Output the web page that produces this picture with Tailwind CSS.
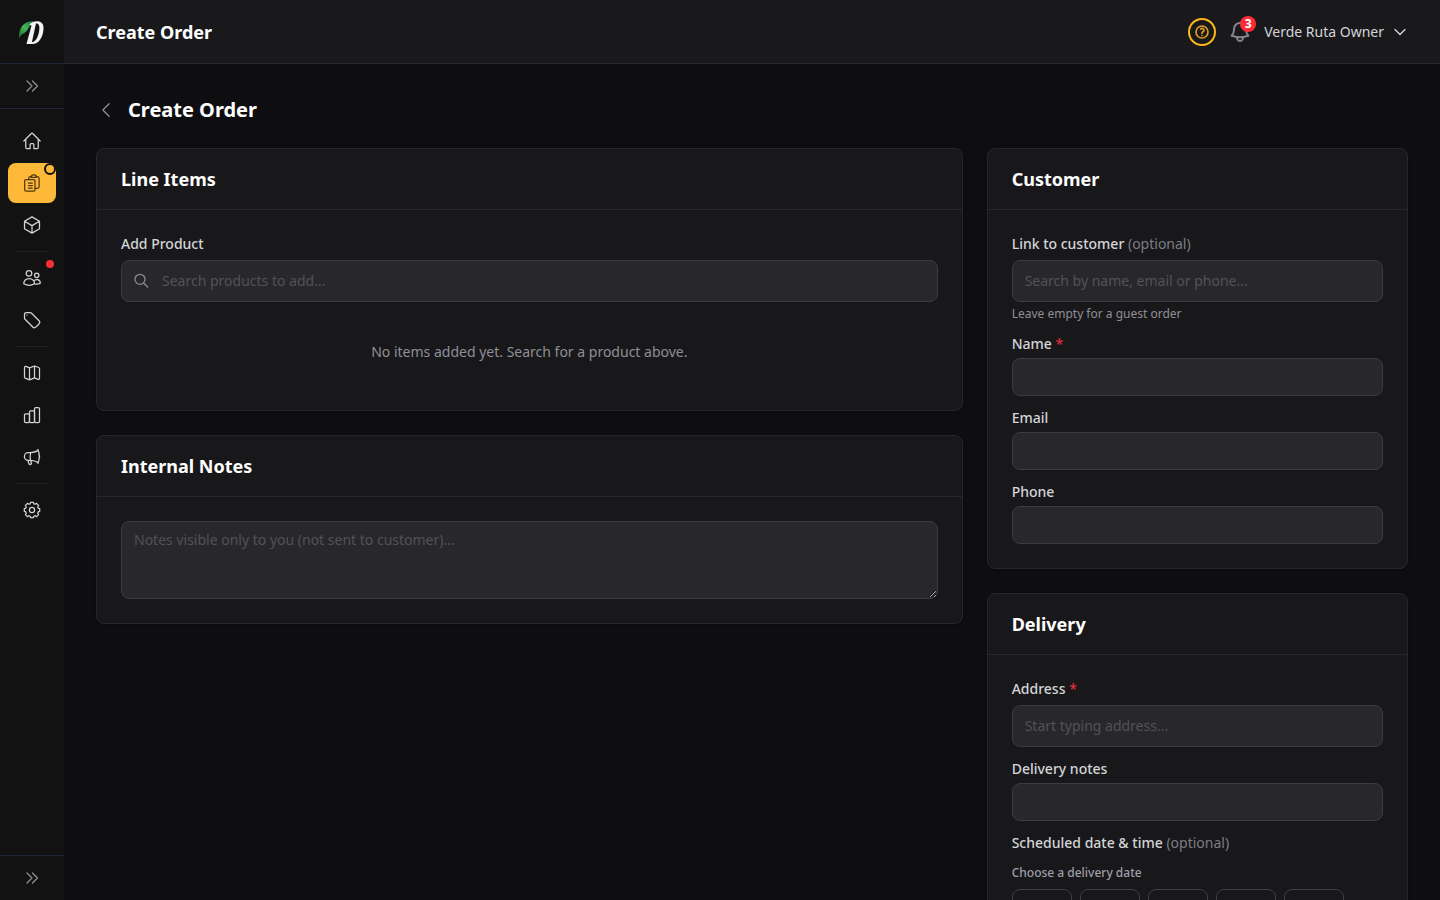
<!DOCTYPE html>
<html lang="en">
<head>
    <meta charset="UTF-8">
    <meta name="viewport" content="width=device-width, initial-scale=1.0">
    <title>Create Order</title>
    <script src="https://cdn.jsdelivr.net/npm/@tailwindcss/browser@4"></script>
</head>
<body class="flex h-screen overflow-hidden bg-[#0e0e10] font-['Noto_Sans',sans-serif] text-sm text-zinc-300">
    <!-- Sidebar -->
    <aside class="flex w-16 shrink-0 flex-col bg-[#121212]">
        <a href="#" aria-label="Dashboard" class="flex h-16 items-center justify-center border-b border-[#1e2836]">
            <svg class="size-8" viewBox="0 0 32 32">
                <defs>
                    <linearGradient id="leaf" x1="0" y1="1" x2="1" y2="0">
                        <stop offset="0" stop-color="#14612b"/>
                        <stop offset=".5" stop-color="#45b556"/>
                        <stop offset="1" stop-color="#1c7a38"/>
                    </linearGradient>
                </defs>
                <path fill="url(#leaf)" d="M3 23C2.500 12 7 5 18 5.200C14 8 12 15.500 6.500 18C4.800 19.200 3.600 21.400 3 23Z"/>
                <path fill="#f4f4f5" fill-rule="evenodd" d="M13.500 8.500C16 4.500 27.500 3 27.500 11.500C27.700 19 23.700 28 17 28H10.500L15.500 9.500C14.800 9.400 14.200 9 13.500 8.500ZM20 7.200L15.900 26.300C20.500 26 23.300 18 23.400 12C23.500 9 22.300 7.400 20 7.200Z"/>
            </svg>
        </a>
        <button type="button" aria-label="Expand sidebar" class="flex h-[45px] items-center justify-center border-b border-[#1e2836] text-[#8f8f96]">
            <svg class="size-4" fill="none" viewBox="0 0 16 16" stroke-width="1.25" stroke="currentColor"><path stroke-linecap="round" stroke-linejoin="round" d="m3 3 5 5-5 5m5.500-10 5 5-5 5"/></svg>
        </button>

        <nav class="flex flex-1 flex-col gap-0.5 px-2 py-3 text-zinc-300">
            <a href="#" aria-label="Home" class="flex h-10 items-center justify-center rounded-lg">
                <svg class="size-5" fill="none" viewBox="0 0 24 24" stroke-width="1.5" stroke="currentColor"><path stroke-linecap="round" stroke-linejoin="round" d="m2.250 12 8.954-8.955c.44-.439 1.152-.439 1.591 0L21.750 12M4.500 9.750v10.125c0 .621.504 1.125 1.125 1.125H9.750v-4.875c0-.621.504-1.125 1.125-1.125h2.250c.621 0 1.125.504 1.125 1.125V21h4.125c.621 0 1.125-.504 1.125-1.125V9.750"/></svg>
            </a>
            <a href="#" aria-label="Orders" class="relative flex h-10 items-center justify-center rounded-lg bg-[#ffb938] text-[#4d3a12]">
                <svg class="size-5" fill="none" viewBox="0 0 20 20" stroke-width="1.25" stroke="currentColor" stroke-linecap="round" stroke-linejoin="round">
                    <rect x="2.700" y="6.500" width="10.300" height="11.700" rx="1.200"/>
                    <path d="M6.500 10h3.800M6.500 12.500h3.800M6.500 15h3.800M6.700 6.500V5.200c0-.9.600-1.500 1.500-1.600l1-.1M14.400 3.500l1 .1c.9.100 1.700.8 1.700 1.700v8.300c0 .9-.7 1.700-1.600 1.700H13M9.200 4.400c0-1.500 1-2.500 2.300-2.500h.6c1.300 0 2.300 1 2.300 2.500Z"/>
                </svg>
                <span class="absolute top-0 right-0 size-3 rounded-full border-2 border-[#121212] bg-[#ffb938]"></span>
            </a>
            <a href="#" aria-label="Products" class="flex h-10 items-center justify-center rounded-lg">
                <svg class="size-5" fill="none" viewBox="0 0 24 24" stroke-width="1.5" stroke="currentColor"><path stroke-linecap="round" stroke-linejoin="round" d="m21 7.500-9-5.250L3 7.500m18 0-9 5.250m9-5.250v9l-9 5.250M3 7.500l9 5.250M3 7.500v9l9 5.250m0-9v9"/></svg>
            </a>
            <hr class="mx-2 my-1 border-[#222224]">
            <a href="#" aria-label="Customers" class="relative flex h-10 items-center justify-center rounded-lg">
                <svg class="size-5" fill="none" viewBox="0 0 20 20" stroke-width="1.25" stroke="currentColor" stroke-linecap="round" stroke-linejoin="round">
                    <circle cx="7" cy="5.300" r="2.800"/>
                    <circle cx="14.700" cy="7.300" r="2.200"/>
                    <path d="M1.800 15.800C1.600 12.800 4 10.600 7.200 10.600s5.500 2.200 5.300 5.200c-3.200 1.900-7.500 1.900-10.700 0ZM11.800 12.900c1.700-2.300 6.600-1.700 6.500 2.300-1.800.9-3.800 1-5.800.6"/>
                </svg>
                <span class="absolute top-0.5 right-0.5 size-2 rounded-full bg-[#fb2c36]"></span>
            </a>
            <a href="#" aria-label="Discounts" class="flex h-10 items-center justify-center rounded-lg">
                <svg class="size-5" fill="none" viewBox="0 0 24 24" stroke-width="1.5" stroke="currentColor"><path stroke-linecap="round" stroke-linejoin="round" d="M9.568 3H5.250A2.250 2.250 0 0 0 3 5.250v4.318c0 .597.237 1.170.659 1.591l9.581 9.581c.699.699 1.780.872 2.607.33a18.095 18.095 0 0 0 5.223-5.223c.542-.827.369-1.908-.33-2.607L11.160 3.660A2.250 2.250 0 0 0 9.568 3Z"/><path stroke-linecap="round" stroke-linejoin="round" d="M6 6h.008v.008H6V6Z"/></svg>
            </a>
            <hr class="mx-2 my-1 border-[#222224]">
            <a href="#" aria-label="Routes" class="flex h-10 items-center justify-center rounded-lg">
                <svg class="size-5" fill="none" viewBox="0 0 20 20" stroke-width="1.25" stroke="currentColor"><path stroke-linecap="round" stroke-linejoin="round" d="M2.500 4.500c0-.9.700-1.400 1.500-1.100l3.500 1.500 5-1.900 4.200 1.500c.5.200.8.500.8 1v9.900c0 .8-.7 1.300-1.400 1l-3.600-1.500-5 1.900-4.300-1.700c-.4-.2-.7-.5-.7-1ZM7.500 4.900v11.900M12.500 3v11.900"/></svg>
            </a>
            <a href="#" aria-label="Analytics" class="flex h-10 items-center justify-center rounded-lg">
                <svg class="size-5" fill="none" viewBox="0 0 20 20" stroke-width="1.25" stroke="currentColor" stroke-linejoin="round">
                    <rect x="2.500" y="8.800" width="5" height="8.700" rx="1.300"/>
                    <rect x="7.500" y="5.800" width="5" height="11.700" rx="1.300"/>
                    <rect x="12.500" y="2.500" width="5" height="15" rx="1.300"/>
                </svg>
            </a>
            <a href="#" aria-label="Marketing" class="flex h-10 items-center justify-center rounded-lg">
                <svg class="size-5" fill="none" viewBox="0 0 20 20" stroke-width="1.25" stroke="currentColor"><path stroke-linecap="round" stroke-linejoin="round" d="M16.300 3.400C13.800 4.800 11.500 5.500 8.600 5.600H6.300a3.900 3.900 0 0 0 0 7.800h2.300c2.900.1 5.200.8 7.700 2.200M8.600 5.600c-.6 2.600-.6 5.200 0 7.800M15.900 2.500c1.800 4.400 1.800 9.600 0 14M16.900 8c.9.700.9 2.300 0 3M6 13.400c.2 1.300.6 2.500 1.100 3.500.3.600.9.800 1.400.5l.5-.3c.5-.3.600-.8.400-1.300-.4-.8-.6-1.500-.8-2.400"/></svg>
            </a>
            <hr class="mx-2 my-1 border-[#222224]">
            <a href="#" aria-label="Settings" class="flex h-10 items-center justify-center rounded-lg">
                <svg class="size-5" fill="none" viewBox="0 0 20 20" stroke-width="1.25" stroke="currentColor" stroke-linejoin="round">
                    <path d="M8.100 3.800 8.600 2.300H11.400L11.900 3.800 13.040 4.270 14.600 3.420 16.580 5.400 15.730 6.960 16.200 8.100 17.700 8.600V11.400L16.200 11.900 15.730 13.040 16.580 14.600 14.600 16.580 13.040 15.730 11.900 16.200 11.400 17.700H8.600L8.100 16.200 6.960 15.730 5.400 16.580 3.420 14.600 4.270 13.040 3.800 11.900 2.300 11.400V8.600L3.800 8.100 4.270 6.960 3.420 5.400 5.400 3.420 6.960 4.270Z"/>
                    <circle cx="10" cy="10" r="2.600"/>
                </svg>
            </a>
        </nav>

        <button type="button" aria-label="Expand menu" class="flex h-[45px] items-center justify-center border-t border-[#1e2836] text-[#8f8f96]">
            <svg class="size-4" fill="none" viewBox="0 0 16 16" stroke-width="1.25" stroke="currentColor"><path stroke-linecap="round" stroke-linejoin="round" d="m3 3 5 5-5 5m5.500-10 5 5-5 5"/></svg>
        </button>
    </aside>

    <div class="flex min-w-0 flex-1 flex-col">
        <!-- Top bar -->
        <header class="flex h-16 shrink-0 items-center justify-between border-b border-zinc-800 bg-[#19191b] px-8">
            <h1 class="text-lg font-bold text-white">Create Order</h1>
            <div class="flex items-center gap-3">
                <button type="button" aria-label="Help" class="flex size-7 items-center justify-center rounded-full border-2 border-[#fcb716] text-[#e09d1c]">
                    <svg class="size-4" fill="none" viewBox="0 0 24 24" stroke-width="2.5" stroke="currentColor"><path stroke-linecap="round" stroke-linejoin="round" d="M9.879 7.519c1.171-1.025 3.071-1.025 4.242 0 1.172 1.025 1.172 2.687 0 3.712-.203.179-.43.326-.67.442-.745.361-1.450.999-1.450 1.827v.75M21 12a9 9 0 1 1-18 0 9 9 0 0 1 18 0Zm-9 5.250h.008v.008H12v-.008Z"/></svg>
                </button>
                <button type="button" aria-label="Notifications" class="relative text-[#85858d]">
                    <svg class="size-6" fill="none" viewBox="0 0 24 24" stroke-width="2" stroke="currentColor"><path stroke-linecap="round" stroke-linejoin="round" d="M14.857 17.082a23.848 23.848 0 0 0 5.454-1.310A8.967 8.967 0 0 1 18 9.750V9A6 6 0 0 0 6 9v.75a8.967 8.967 0 0 1-2.312 6.022c1.733.64 3.560 1.085 5.455 1.310m5.714 0a24.255 24.255 0 0 1-5.714 0m5.714 0a3 3 0 1 1-5.714 0"/></svg>
                    <span class="absolute -top-1 -right-1 flex size-4 items-center justify-center rounded-full bg-[#fb2c36] text-xs font-bold text-white">3</span>
                </button>
                <button type="button" class="flex items-center gap-2 text-zinc-300">
                    Verde Ruta Owner
                    <svg class="size-4" fill="none" viewBox="0 0 24 24" stroke-width="2" stroke="currentColor"><path stroke-linecap="round" stroke-linejoin="round" d="m19.500 8.250-7.500 7.500-7.500-7.500"/></svg>
                </button>
            </div>
        </header>

        <main class="flex-1 overflow-y-auto px-8 pt-8 [scrollbar-width:none]">
            <div class="mb-6 flex items-center gap-3">
                <a href="#" aria-label="Back" class="text-[#8f8f96]">
                    <svg class="size-5" fill="none" viewBox="0 0 24 24" stroke-width="1.5" stroke="currentColor"><path stroke-linecap="round" stroke-linejoin="round" d="M15.750 19.500 8.250 12l7.500-7.500"/></svg>
                </a>
                <h2 class="text-xl font-bold text-white">Create Order</h2>
            </div>

            <form class="grid grid-cols-3 items-start gap-6">
                <div class="col-span-2 space-y-6">
                    <section class="rounded-lg border border-zinc-800 bg-[#18181a] shadow-sm">
                        <h3 class="border-b border-zinc-800 px-6 py-4 text-lg font-bold text-white">Line Items</h3>
                        <div class="p-6">
                            <label for="product" class="mb-1.5 block font-medium">Add Product</label>
                            <div class="relative">
                                <svg class="absolute top-3 left-3 size-4 text-[#8b8b92]" fill="none" viewBox="0 0 24 24" stroke-width="2" stroke="currentColor"><path stroke-linecap="round" stroke-linejoin="round" d="m22 22.500-6-6M18 11a7.500 7.500 0 1 1-15 0 7.500 7.500 0 0 1 15 0Z"/></svg>
                                <input type="text" id="product" placeholder="Search products to add..."
                                    class="block w-full rounded-lg border border-[#3c3c40] bg-[#28282a] py-2.5 pr-3 pl-10 placeholder-[#525257]">
                            </div>
                            <p class="mt-4 py-6 text-center text-[#8f8f97]">No items added yet. Search for a product above.</p>
                        </div>
                    </section>

                    <section class="rounded-lg border border-zinc-800 bg-[#18181a] shadow-sm">
                        <h3 class="border-b border-zinc-800 px-6 py-4 text-lg font-bold text-white">Internal Notes</h3>
                        <div class="p-6">
                            <textarea id="notes" rows="3" aria-label="Internal Notes" placeholder="Notes visible only to you (not sent to customer)..."
                                class="block w-full rounded-lg border border-[#3c3c40] bg-[#28282a] px-3 py-2 placeholder-[#525257]"></textarea>
                        </div>
                    </section>
                </div>

                <div class="space-y-6">
                    <section class="rounded-lg border border-zinc-800 bg-[#18181a] shadow-sm">
                        <h3 class="border-b border-zinc-800 px-6 py-4 text-lg font-bold text-white">Customer</h3>
                        <div class="space-y-3 p-6">
                            <div>
                                <label for="customer" class="mb-1.5 block font-medium">Link to customer <span class="font-normal text-[#7d7d85]">(optional)</span></label>
                                <input type="text" id="customer" placeholder="Search by name, email or phone..."
                                    class="block w-full rounded-lg border border-[#3c3c40] bg-[#28282a] px-3 py-2.5 placeholder-[#525257]">
                                <p class="mt-1 text-xs text-[#8f8f97]">Leave empty for a guest order</p>
                            </div>
                            <div>
                                <label for="name" class="mb-1 block font-medium">Name <span class="text-[#e02d38]">*</span></label>
                                <input type="text" id="name" class="block w-full rounded-lg border border-[#3c3c40] bg-[#28282a] px-3 py-2">
                            </div>
                            <div>
                                <label for="email" class="mb-1 block font-medium">Email</label>
                                <input type="email" id="email" class="block w-full rounded-lg border border-[#3c3c40] bg-[#28282a] px-3 py-2">
                            </div>
                            <div>
                                <label for="phone" class="mb-1 block font-medium">Phone</label>
                                <input type="tel" id="phone" class="block w-full rounded-lg border border-[#3c3c40] bg-[#28282a] px-3 py-2">
                            </div>
                        </div>
                    </section>

                    <section class="rounded-lg border border-zinc-800 bg-[#18181a] shadow-sm">
                        <h3 class="border-b border-zinc-800 px-6 py-4 text-lg font-bold text-white">Delivery</h3>
                        <div class="space-y-3 p-6">
                            <div>
                                <label for="address" class="mb-1.5 block font-medium">Address <span class="text-[#e02d38]">*</span></label>
                                <input type="text" id="address" placeholder="Start typing address..."
                                    class="block w-full rounded-lg border border-[#3c3c40] bg-[#28282a] px-3 py-2.5 placeholder-[#525257]">
                            </div>
                            <div>
                                <label for="delivery-notes" class="mb-1 block font-medium">Delivery notes</label>
                                <input type="text" id="delivery-notes" class="block w-full rounded-lg border border-[#3c3c40] bg-[#28282a] px-3 py-2">
                            </div>
                            <fieldset>
                                <legend class="font-medium">Scheduled date &amp; time <span class="font-normal text-[#7d7d85]">(optional)</span></legend>
                                <p class="mt-3 mb-2 text-xs font-medium text-zinc-400">Choose a delivery date</p>
                                <div class="flex gap-2">
                                    <button type="button" aria-label="Day 1" class="h-16 w-15 rounded-lg border border-zinc-700"></button>
                                    <button type="button" aria-label="Day 2" class="h-16 w-15 rounded-lg border border-zinc-700"></button>
                                    <button type="button" aria-label="Day 3" class="h-16 w-15 rounded-lg border border-zinc-700"></button>
                                    <button type="button" aria-label="Day 4" class="h-16 w-15 rounded-lg border border-zinc-700"></button>
                                    <button type="button" aria-label="Day 5" class="h-16 w-15 rounded-lg border border-zinc-700"></button>
                                </div>
                            </fieldset>
                        </div>
                    </section>
                </div>
            </form>
        </main>
    </div>
</body>
</html>
